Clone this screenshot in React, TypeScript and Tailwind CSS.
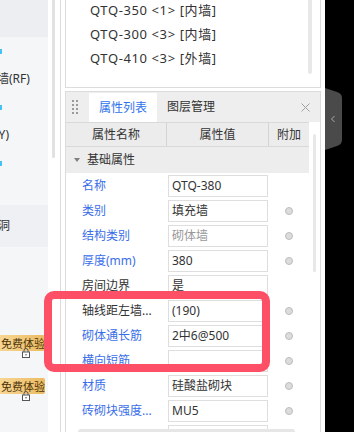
import React from 'react';

type Row = {
  label: string;
  value: string;
  blue: boolean;
  dot: boolean;
  muted?: boolean;
};

const rows: Row[] = [
  { label: '名称', value: 'QTQ-380', blue: true, dot: false },
  { label: '类别', value: '填充墙', blue: true, dot: true },
  { label: '结构类别', value: '砌体墙', blue: true, dot: true, muted: true },
  { label: '厚度(mm)', value: '380', blue: true, dot: true },
  { label: '房间边界', value: '是', blue: false, dot: false },
  { label: '轴线距左墙...', value: '(190)', blue: false, dot: true },
  { label: '砌体通长筋', value: '2中6@500', blue: true, dot: true },
  { label: '横向短筋', value: '', blue: true, dot: true },
  { label: '材质', value: '硅酸盐砌块', blue: true, dot: true },
  { label: '砖砌块强度...', value: 'MU5', blue: true, dot: true },
  { label: '', value: '', blue: true, dot: false },
];

const walls = [
  { name: 'QTQ-350', n: 1, kind: '内墙' },
  { name: 'QTQ-300', n: 3, kind: '内墙' },
  { name: 'QTQ-410', n: 3, kind: '外墙' },
];

function Badge() {
  return (
    <div className="relative">
      <div className="flex h-[16px] w-[45px] items-center whitespace-nowrap rounded-r-[2px] bg-gradient-to-r from-[#f7d693] to-[#ebbb62] pl-[1px] text-[11px] leading-none text-[#4d3408]">
        免费体验
      </div>
      {/* lock */}
      <svg className="absolute left-[22px] top-[13px]" width="8" height="10" viewBox="0 0 8 10">
        <path d="M2 4 V2.5 A2 2 0 0 1 6 2.5 V4" fill="none" stroke="#555" strokeWidth="1" />
        <rect x="0.5" y="4" width="7" height="5.5" fill="#fff" stroke="#555" strokeWidth="1" />
        <circle cx="4" cy="6.7" r="0.8" fill="#555" />
      </svg>
    </div>
  );
}

function Sidebar() {
  return (
    <div className="flex w-[48px] shrink-0 flex-col overflow-hidden bg-[#f5f6f8] text-[12px] text-[#333]">
      <div className="h-[37px] shrink-0 bg-[#eceef1]" />
      <div className="flex h-[28px] shrink-0 items-center">
        <div className="h-[5px] w-[2px] bg-[#46c2f0]" />
      </div>
      <div className="flex h-[28px] shrink-0 items-center whitespace-nowrap">
        <span className="ml-[-27px]">女儿墙(RF)</span>
      </div>
      <div className="flex h-[28px] shrink-0 items-center">
        <div className="h-[5px] w-[2px] bg-[#46c2f0]" />
      </div>
      <div className="flex h-[28px] shrink-0 items-center whitespace-nowrap">
        <span className="ml-[-5px]">(Y)</span>
      </div>
      <div className="flex h-[28px] shrink-0 items-center">
        <div className="h-[5px] w-[2px] bg-[#46c2f0]" />
      </div>
      <div className="h-[28px] shrink-0" />
      <div className="flex h-[42px] shrink-0 items-center whitespace-nowrap bg-[#eef0f3]">
        <span className="ml-[-2px]">洞</span>
      </div>
      <div className="h-[88px] shrink-0" />
      <Badge />
      <div className="h-[27px] shrink-0" />
      <Badge />
    </div>
  );
}

function Dots() {
  return (
    <div className="grid grid-cols-2 gap-x-[2px] gap-y-[2px]">
      {Array.from({ length: 8 }).map((_, i) => (
        <div key={i} className="h-[2px] w-[2px] bg-[#9a9a9a]" />
      ))}
    </div>
  );
}

function PropertyRow({ row }: { row: Row }) {
  return (
    <div className="flex h-[25px] shrink-0 items-center">
      <div
        className={`w-[101px] truncate whitespace-nowrap pl-[16px] ${row.blue ? 'text-[#3a6ee8]' : 'text-[#333]'}`}
      >
        {row.label}
      </div>
      <div className="w-[102px] pl-[1px]">
        <div
          className={`flex h-[22px] w-[100px] items-center border border-[#dedede] pl-[3px] whitespace-nowrap ${row.muted ? 'text-[#999]' : 'text-[#333]'}`}
        >
          {row.value}
        </div>
      </div>
      <div className="flex w-[40px] justify-center">
        {row.dot && <div className="h-[8px] w-[8px] rounded-full border border-[#bdbdbd] bg-[#dcdcdc]" />}
      </div>
    </div>
  );
}

export default function App() {
  return (
    <div className="relative flex h-[432px] w-[354px] overflow-hidden bg-black font-['Noto_Sans','Noto_Sans_CJK_SC',sans-serif] text-[12px] text-[#333]">
      <Sidebar />

      {/* sidebar scroll strip */}
      <div className="w-[13px] shrink-0 border-r border-[#dcdcdc] bg-white">
        <div className="ml-[4px] h-[158px] w-[3px] rounded-b-full bg-[#e2e2e2]" />
      </div>

      {/* main panel */}
      <div className="flex w-[264px] shrink-0 flex-col bg-white px-[4px]">
        {/* wall list */}
        <div className="flex h-[88px] shrink-0 border-x border-b border-[#dcdcdc]">
          <div className="mt-[-1px] flex-1 pl-[24px] text-[13px] tracking-[0.6px]">
            {walls.map((w) => (
              <div key={w.name} className="flex h-[24px] items-center whitespace-nowrap">
                {w.name} &lt;{w.n}&gt; [{w.kind}]
              </div>
            ))}
          </div>
          <div className="mr-[8px] h-[74px] w-[4px] rounded-b-full bg-[#e8e8e8]" />
        </div>

        {/* properties */}
        <div className="mt-[3px] flex min-h-0 flex-1 flex-col overflow-hidden border-x border-t border-[#dcdcdc]">
          <div className="flex h-[30px] shrink-0 items-center bg-[#eeeeee]">
            <div className="ml-[6px]">
              <Dots />
            </div>
            <div className="ml-[11px] flex h-[29px] items-center self-end bg-white px-[10px] text-[#2f73ea]">属性列表</div>
            <div className="px-[10px]">图层管理</div>
            <div className="flex-1" />
            <svg className="mr-[10px]" width="9" height="9" viewBox="0 0 9 9">
              <path d="M0.5 0.5 L8.5 8.5 M8.5 0.5 L0.5 8.5" stroke="#a0a0a0" strokeWidth="1" />
            </svg>
          </div>

          <div className="flex min-h-0 flex-1">
            <div className="flex w-[243px] shrink-0 flex-col">
              <div className="flex h-[25px] shrink-0 border-y border-[#d9d9d9] bg-[#ececec]">
                <div className="flex w-[101px] items-center justify-center border-r border-[#d4d4d4]">属性名称</div>
                <div className="flex w-[102px] items-center justify-center border-r border-[#d4d4d4]">属性值</div>
                <div className="flex w-[40px] items-center justify-center">附加</div>
              </div>
              <div className="flex h-[26px] shrink-0 items-center bg-[#ededed] pl-[8px]">
                <svg width="6" height="4" viewBox="0 0 6 4">
                  <path d="M0 0 H6 L3 4 Z" fill="#808080" />
                </svg>
                <span className="ml-[7px]">基础属性</span>
              </div>
              {rows.map((r, i) => (
                <PropertyRow key={i} row={r} />
              ))}
            </div>
            <div className="flex-1 pl-[4px]">
              <div className="mt-[12px] h-[138px] w-[3px] rounded-full bg-[#e8e8e8]" />
            </div>
          </div>
        </div>
      </div>

      {/* dark edge with collapse tab */}
      <div className="flex-1 bg-black">
        <svg className="mt-[88px]" width="17" height="62" viewBox="0 0 17 62">
          <path d="M0 0 L12 4 Q17 5.5 17 10 L17 52 Q17 56.5 12 58 L0 62 Z" fill="#4a4a4a" />
          <path d="M9.5 28 L6.5 31 L9.5 34" fill="none" stroke="#a8a8a8" strokeWidth="1" />
        </svg>
      </div>

      {/* horizontal scrollbar at the bottom */}
      <div className="pointer-events-none absolute bottom-0 left-[78px] h-[3px] w-[217px] rounded-t-full bg-[#e6e6e6]" />

      {/* red annotation */}
      <div className="pointer-events-none absolute left-[44px] top-[291px] h-[81px] w-[226px] rounded-[10px] border-[8px] border-[#fd4f66]" />
    </div>
  );
}
